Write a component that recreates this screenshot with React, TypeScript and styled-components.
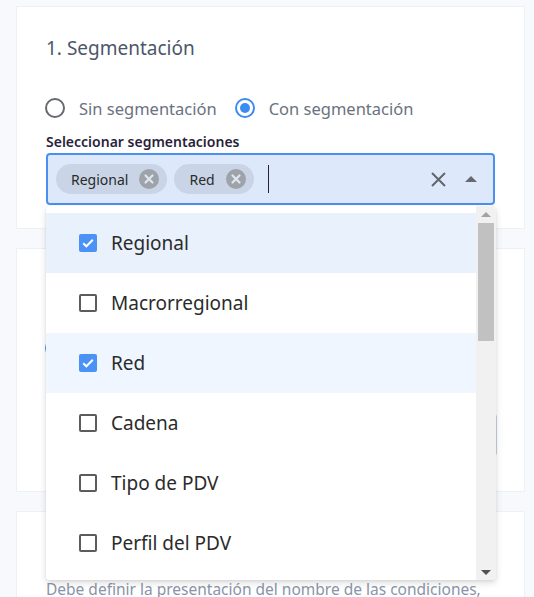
import styled, { createGlobalStyle } from "styled-components";

const GlobalStyle = createGlobalStyle`
  html, body {
    margin: 0;
    overflow: hidden;
    background: #f7f9fc;
    font-family: "Noto Sans", "Open Sans", sans-serif;
  }
`;

const options = [
  { label: "Regional", checked: true },
  { label: "Macrorregional", checked: false },
  { label: "Red", checked: true },
  { label: "Cadena", checked: false },
  { label: "Tipo de PDV", checked: false },
  { label: "Perfil del PDV", checked: false },
  { label: "Canal", checked: false },
];

function RadioIcon({ checked }: { checked: boolean }) {
  const color = checked ? "#3b8cf0" : "#666a70";
  return (
    <svg width="20" height="20" viewBox="0 0 20 20">
      <circle cx="10" cy="10" r="9" fill="none" stroke={color} strokeWidth="2" />
      {checked && <circle cx="10" cy="10" r="5" fill={color} />}
    </svg>
  );
}

function ChipDelete() {
  return (
    <svg width="20" height="20" viewBox="0 0 20 20">
      <circle cx="10" cy="10" r="10" fill="#9ea3aa" />
      <path d="M6.5 6.5 L13.5 13.5 M13.5 6.5 L6.5 13.5" stroke="#dfe6ef" strokeWidth="2.2" strokeLinecap="round" />
    </svg>
  );
}

function ClearIcon() {
  return (
    <svg width="15" height="15" viewBox="0 0 15 15">
      <path d="M1 1 L14 14 M14 1 L1 14" stroke="#62666c" strokeWidth="2" />
    </svg>
  );
}

function CheckIcon() {
  return (
    <svg width="18" height="18" viewBox="0 0 18 18">
      <rect width="18" height="18" rx="2" fill="#4a92f5" />
      <path d="M4.2 9.2 L7.4 12.3 L13.8 5.8" fill="none" stroke="#fff" strokeWidth="2" />
    </svg>
  );
}

export default function App() {
  return (
    <>
      <GlobalStyle />
      <Page>
        <Card>
          <Title>1. Segmentación</Title>
          <RadioRow>
            <RadioItem>
              <RadioIcon checked={false} /> Sin segmentación
            </RadioItem>
            <RadioItem>
              <RadioIcon checked /> Con segmentación
            </RadioItem>
          </RadioRow>
          <FieldLabel>Seleccionar segmentaciones</FieldLabel>
          <SelectField>
            <Chip>
              Regional <ChipDelete />
            </Chip>
            <Chip>
              Red <ChipDelete />
            </Chip>
            <Caret />
            <Adornments>
              <ClearIcon />
              <Triangle $up />
            </Adornments>
            <Dropdown>
              <OptionList>
                {options.map((o, i) => (
                  <OptionRow key={o.label} $bg={i === 0 ? "#e9f1fd" : o.checked ? "#eff6ff" : "#fff"}>
                    {o.checked ? <CheckIcon /> : <EmptyBox />}
                    {o.label}
                  </OptionRow>
                ))}
              </OptionList>
              <ScrollTrack>
                <ScrollButton>
                  <Triangle $up $small $color="#a3a3a3" />
                </ScrollButton>
                <Thumb />
                <Spacer />
                <ScrollButton>
                  <Triangle $small $color="#505050" />
                </ScrollButton>
              </ScrollTrack>
            </Dropdown>
          </SelectField>
        </Card>

        <Card>
          <Title>2. Condiciones</Title>
          <RadioRow style={{ marginTop: 26 }}>
            <RadioItem>
              <RadioIcon checked /> Monto
            </RadioItem>
            <RadioItem>
              <RadioIcon checked={false} /> Porcentaje
            </RadioItem>
          </RadioRow>
          <TextInput placeholder="Valor" />
        </Card>

        <Card>
          <Title>3. Nombre de las condiciones</Title>
          <Description>Debe definir la presentación del nombre de las condiciones, para cada segmentación seleccionada.</Description>
        </Card>
      </Page>
    </>
  );
}

const Page = styled.div`
  display: flex;
  flex-direction: column;
  gap: 19px;
  padding: 6px 9px 0 16px;
`;

const Card = styled.section`
  background: #fff;
  border: 1px solid #edf0f5;
  padding: 29px 29px 23px 29px;
`;

const Title = styled.h2`
  margin: 0;
  font-size: 19px;
  line-height: 24px;
  font-weight: 400;
  color: #4c566a;
`;

const RadioRow = styled.div`
  display: flex;
  align-items: center;
  gap: 18px;
  height: 40px;
  margin-top: 28px;
  margin-left: -1px;
`;

const RadioItem = styled.label`
  display: flex;
  align-items: center;
  gap: 14px;
  font-size: 16.5px;
  color: #6b7280;
`;

const FieldLabel = styled.div`
  margin-top: 5px;
  font-size: 14px;
  line-height: 18px;
  font-weight: 600;
  color: #2a1f3d;
`;

const SelectField = styled.div`
  position: relative;
  box-sizing: border-box;
  height: 52px;
  margin-top: 2px;
  display: flex;
  align-items: center;
  gap: 7px;
  padding: 0 16px 0 8px;
  border: 2px solid #4a90ef;
  border-radius: 4px;
  background: #dde9fb;
`;

const Chip = styled.div`
  display: flex;
  align-items: center;
  gap: 11px;
  height: 30px;
  padding: 0 8px 0 15px;
  border-radius: 15px;
  background: #c9d5e6;
  font-size: 14px;
  color: #2a2a2a;
`;

const Caret = styled.span`
  width: 1.5px;
  height: 28px;
  margin-left: 7px;
  background: #2a1f3d;
`;

const Adornments = styled.div`
  margin-left: auto;
  display: flex;
  align-items: center;
  gap: 19px;
`;

const Triangle = styled.span<{ $up?: boolean; $small?: boolean; $color?: string }>`
  width: 0;
  height: 0;
  border-left: ${(p) => (p.$small ? 5 : 6.5)}px solid transparent;
  border-right: ${(p) => (p.$small ? 5 : 6.5)}px solid transparent;
  ${(p) => (p.$up ? "border-bottom" : "border-top")}: ${(p) => (p.$small ? 5 : 6)}px solid
    ${(p) => p.$color ?? "#666a70"};
`;

const Dropdown = styled.div`
  position: absolute;
  top: calc(100% + 3px);
  left: -2px;
  right: -3px;
  height: 374px;
  display: flex;
  background: #fff;
  border-radius: 4px;
  overflow: hidden;
  box-shadow: 0 3px 7px rgba(0, 0, 0, 0.13), 0 1px 3px rgba(0, 0, 0, 0.07);
  z-index: 10;
`;

const OptionList = styled.div`
  flex: 1;
  overflow: hidden;
  padding: 7px 0;
`;

const OptionRow = styled.div<{ $bg: string }>`
  height: 60px;
  display: flex;
  align-items: center;
  gap: 14px;
  padding-left: 33px;
  background: ${(p) => p.$bg};
  font-size: 19px;
  color: #2b2b2b;
`;

const EmptyBox = styled.span`
  box-sizing: border-box;
  width: 18px;
  height: 18px;
  border: 2px solid #5c5c5c;
  border-radius: 2px;
`;

const ScrollTrack = styled.div`
  width: 20px;
  display: flex;
  flex-direction: column;
  align-items: center;
  background: #f1f1f1;
`;

const ScrollButton = styled.div`
  height: 16px;
  display: flex;
  align-items: center;
  justify-content: center;
`;

const Thumb = styled.div`
  width: 16px;
  height: 118px;
  margin-top: 1px;
  background: #c1c1c1;
`;

const Spacer = styled.div`
  flex: 1;
`;

const TextInput = styled.input`
  display: block;
  box-sizing: border-box;
  width: calc(100% + 2px);
  height: 44px;
  margin: 45px 0 11px;
  border: 1px solid #c8d0de;
  border-radius: 4px;
  font: inherit;
`;

const Description = styled.p`
  margin: 12px 0 0;
  font-size: 15.5px;
  line-height: 24px;
  color: #8a94a8;
`;
